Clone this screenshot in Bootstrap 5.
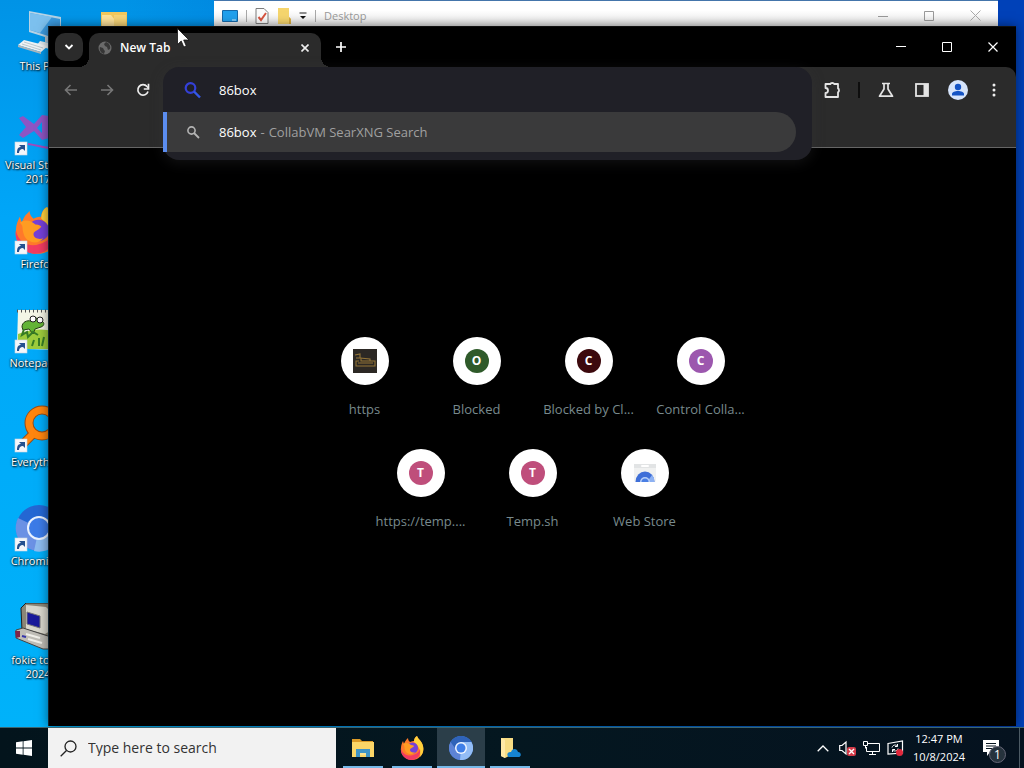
<!DOCTYPE html>
<html lang="en">
<head>
<meta charset="utf-8">
<meta name="viewport" content="width=device-width, initial-scale=1">
<title>Desktop</title>
<link href="https://cdn.jsdelivr.net/npm/bootstrap@5.3.0/dist/css/bootstrap.min.css" rel="stylesheet">
<style>
body{font-family:"Open Sans","Noto Sans",sans-serif;font-size:13px;line-height:16px;cursor:default}
svg{display:block;flex:none}
button{border:0;background:none;padding:0;color:inherit;display:flex;align-items:center;justify-content:center;flex:none}
.desktop{background:linear-gradient(90deg,rgba(0,60,170,0) 12%,#0041b8 96%),linear-gradient(180deg,#0093e6,#00a6f8 30%,#00b2fa);min-height:0}
.shortcut{width:76px;height:99px;padding-top:9px;font-size:11px;line-height:14px;color:#fff;text-shadow:1px 1px 2px #000,0 0 2px #000;text-decoration:none;text-align:center}
.shortcut svg{margin-bottom:2px}
.shortcut-col{width:76px}
.explorer{left:214px;right:26px;top:0;height:400px;background:#fff;border-top:1px solid #4475ab}
.explorer-bar{height:25px;background:linear-gradient(#fff 40%,#e4e4e4);color:#9a9a9a;font-size:11px;padding-left:8px;padding-top:4px}
.vline{width:1px;height:12px;background:#a8a8a8}
.caption-btn{width:46px}
.browser{left:48px;right:8px;top:26px;bottom:1px;background:#000;border-left:1px solid #10202c;border-top:1px solid #101010;box-shadow:0 0 10px rgba(0,0,0,.5);color:#e3e3e3}
.tabstrip{height:40px;padding-left:6px}
.tab-search{width:28px;height:28px;margin-top:6px;background:#2b2b2b;border-radius:10px}
.tab-active{width:232px;height:34px;margin:6px 0 0 6px;padding:0 8px 0 9px;background:#2b2b2b;border-radius:10px 10px 0 0;color:#fff;font-size:12px;font-weight:600}
.tab-active::before,.tab-active::after{content:"";position:absolute;bottom:0;width:10px;height:10px}
.tab-active::before{left:-10px;background:radial-gradient(circle at 0 0,transparent 10px,#2b2b2b 10px)}
.tab-active::after{right:-10px;background:radial-gradient(circle at 100% 0,transparent 10px,#2b2b2b 10px)}
.tab-new{width:28px;margin-left:6px;height:40px}
.toolbar{height:81px;background:#2b2b2b;border-bottom:1px solid #666;border-top-right-radius:10px;padding:0 4px}
.tool{width:36px;height:46px}
.tool-sep{width:18px;height:46px}
.tool-sep span{width:2px;height:16px;background:#0e0e0e}
.omni{margin:0 2px}
.omni-pop{left:0;right:0;top:0;background:#202027;border-radius:16px;padding-bottom:8px;box-shadow:0 3px 14px rgba(60,60,64,.3);z-index:2}
.omni-row{height:45px;padding-left:18px}
.omni-row input{border:0;outline:0;background:none;color:#fff;font-size:13px;padding:0;margin-left:14px}
.omni-hit{height:40px;margin-right:16px;padding-left:18px;background:#3a3a3b;border-left:4px solid #5b8def;border-radius:0 20px 20px 0;color:#a0a0a0;text-decoration:none}
.omni-hit b{font-weight:400;color:#fff;margin-left:14px}
.tiles{width:448px;max-width:100%}
.tile{width:112px;height:112px;padding:16px 12px;color:#788a8d;text-decoration:none}
.tile-disc{width:48px;height:48px;background:#fff;margin-bottom:16px;flex:none}
.tile-dot{width:24px;height:24px;color:#fff;font-size:12px;font-weight:700}
.green{background:#2f5a2a}.maroon{background:#3c090d}.violet{background:#9c57ae}.rose{background:#bf4e7b}
.edge{height:1px;background:#3c6570}
.taskbar{height:40px;background:linear-gradient(90deg,#03141c,#041720 50%,#05121f);color:#fff;flex:none}
.start{width:48px}
.search{width:288px;background:#f2f2f2;color:#333;padding-left:12px;margin-right:3px}
.search input{border:0;outline:0;background:none;font-size:14px;color:#333;padding:0;margin-left:11px;width:220px}
.search input::placeholder{color:#333;opacity:1}
.task{width:48px;margin-right:1px;position:relative}
.task::after{content:"";position:absolute;left:4px;right:4px;bottom:0;height:2px;background:#76b9e8}
.task.on{background:#2b3e49}
.task.on::after{left:0;right:0}
.tray{width:24px}
.clock{width:64px;font-size:11px;line-height:18px;padding-top:2px;text-align:center;white-space:nowrap}
.notify{width:48px;position:relative}
.notify-count{left:18px;top:18px;width:17px;height:17px;background:#26333d;border:1px solid #667;font-size:12px}
.show-desk{width:5px;border-left:1px solid #4c5a64}
.pointer{left:177px;top:28px;z-index:5}
</style>
</head>
<body class="vh-100 d-flex flex-column overflow-hidden">
<svg width="0" height="0" class="position-absolute" aria-hidden="true"><defs>
<g id="lnk"><rect x="1" y="34" width="12" height="13" fill="#f4f6fa" stroke="#cdd6e0" stroke-width=".6"/><path d="M3 45c0-4 1-6 4-6l-2-2h6v6l-2-2c-3 0-4 2-4 4z" fill="#24508f"/></g>
<g id="orb"><circle cx="12" cy="12" r="12" fill="#4285e8"/><path d="M12 12L1.6 6A12 12 0 0 0 11 24z" fill="#5d83d6"/><path d="M12 12L11 24A12 12 0 0 0 22.4 6H12z" fill="#93bdf6"/><path d="M1.6 6A12 12 0 0 1 22.4 6H12a6 6 0 0 0-6 6z" fill="#2f63b9"/><circle cx="12" cy="12" r="6" fill="#eef4ff"/><circle cx="12" cy="12" r="4.5" fill="#3f7fe8"/></g>
<g id="fox"><path d="M4 8C5 5 6 4 8 2c0 2 1 3 2 4 2-1 3-1 4-1 0-2 1-4 3-5 1 3 5 5 6 10 2 8-4 14-11 14S0 18 1 12c0-3 1-5 2-7z" fill="#ff7a2a"/><path d="M17 0c1 3 5 5 6 10 1 4 0 8-3 11 1-6-1-11-6-15 0-3 1-5 3-6z" fill="#ffd23c"/><path d="M1 12c1 6 7 9 12 7 4-1 6-3 7-6 1 5-2 11-9 11C5 24 0 18 1 12z" fill="#f23b62"/><circle cx="12.500" cy="12" r="5.500" fill="#7540d8"/><path d="M3 8c3-2 6-1 8 1 2 0 3 1 3 1-1 2-4 2-4 4s3 3 5 2c-3 4-9 2-10-2-1-3 0-4-2-6z" fill="#ff9c22"/></g>
</defs></svg>

<main class="desktop position-relative flex-grow-1 overflow-hidden">
  <nav class="d-flex h-100" aria-label="Desktop shortcuts">
    <div class="shortcut-col d-flex flex-column flex-shrink-0">
      <a href="#" class="shortcut d-flex flex-column align-items-center"><svg width="48" height="48" viewBox="0 0 48 48"><path d="M15 2l32 6v25L15 23z" fill="#b5d3e6"/><path d="M16 4l30 6v21L16 21z" fill="#3b9be0"/><path d="M16 4l22 4-12 16-10-3z" fill="#7cc0ee"/><path d="M31 27l8 2v6l-8-2z" fill="#b5c8d4"/><path d="M26 32l14 3 3 3-8 2-12-4z" fill="#dfe8ec"/><path d="M10 31l24 6-7 6L4 36z" fill="#eef2f4"/><path d="M4 36l23 7v2L4 38z" fill="#a9b6bd"/><path d="M10 33l19 6M8 35l19 6" stroke="#bcc8ce" fill="none"/></svg>This PC</a>
      <a href="#" class="shortcut d-flex flex-column align-items-center"><svg width="48" height="48" viewBox="0 0 48 48"><path d="M5 10l4-2 11 8 8-9 7 1v22l-7 2-8-9-11 7-4-3 7-8zM28 14l-5 6 5 5z" fill="#8d55c4" fill-rule="evenodd"/><path d="M14 36c8 1 16 4 30 5" stroke="#a149bc" stroke-width="2" fill="none"/><use href="#lnk"/></svg>Visual Studio 2017</a>
      <a href="#" class="shortcut d-flex flex-column align-items-center"><svg width="48" height="48" viewBox="0 0 48 48"><use href="#fox" transform="scale(1.950)"/><use href="#lnk"/></svg>Firefox</a>
      <a href="#" class="shortcut d-flex flex-column align-items-center"><svg width="48" height="48" viewBox="0 0 48 48"><path d="M4 4h38l3 40-33-1-9-3z" fill="#f4f6e6"/><path d="M4 28q20-8 40-2v17H12L4 40z" fill="#9ccc3c"/><path d="M3 5h40" stroke="#555" stroke-width="3" stroke-dasharray="1 3"/><path d="M8 21c0-5 5-7 9-6 1-4 5-5 7-1l4 1c3 2 2 5-1 6l-6 2-2 5-4-5-6 1z" fill="#63b436" stroke="#263f16"/><circle cx="19" cy="13" r="3" fill="#fff" stroke="#222"/><circle cx="26" cy="14" r="3" fill="#fff" stroke="#222"/><path d="M10 23l-2 6 5-3 1 5 5-5 5 3M20 34l-2 6m7-8v8m5-9l-2 9" stroke="#357c25" stroke-width="2" fill="none"/><use href="#lnk"/></svg>Notepad++</a>
      <a href="#" class="shortcut d-flex flex-column align-items-center"><svg width="48" height="48" viewBox="0 0 48 48"><g fill="none"><circle cx="28" cy="18" r="13" stroke="#9a4b14" stroke-width="9"/><path d="M19 29L7 41" stroke="#9a4b14" stroke-width="9"/><circle cx="28" cy="18" r="13" stroke="#ff850e" stroke-width="7"/><path d="M19 29L7 41" stroke="#ff850e" stroke-width="7"/></g><use href="#lnk"/></svg>Everything</a>
      <a href="#" class="shortcut d-flex flex-column align-items-center"><svg width="48" height="48" viewBox="0 0 48 48"><circle cx="25" cy="24" r="23" fill="#2467d3"/><path d="M25 24L4 14a23 23 0 0 0 20 33z" fill="#6b91e4"/><path d="M25 24l-5 23a23 23 0 0 0 27-30z" fill="#8cbbef"/><circle cx="25" cy="24" r="12" fill="#eaf2ff"/><circle cx="25" cy="24" r="10" fill="#3c7be7"/><use href="#lnk"/></svg>Chromium</a>
      <a href="#" class="shortcut d-flex flex-column align-items-center"><svg width="48" height="48" viewBox="0 0 48 48"><path d="M7 5l5-5h22l8 4v26l-8 6-26-8z" fill="#8a8677" stroke="#222"/><path d="M12 2l20 2 4 4v20l-5 3-19-5z" fill="#d9d7cd"/><path d="M13 9l13 4v12l-13-4z" fill="#1a1a9a" stroke="#777"/><path d="M2 27l7-2 25 8 8 5-7 8-6 0L2 35z" fill="#bfbdb6" stroke="#444"/><path d="M12 31l14 4M14 36l14 4" stroke="#f0efe9" stroke-width="2"/><path d="M1 28h5v6l-4 1z" fill="#7e2448"/><path d="M8 33l4 1" stroke="#33a" stroke-width="2"/></svg>fokie town 2024</a>
    </div>
    <div class="shortcut-col flex-shrink-0">
      <a href="#" aria-label="Folder" class="shortcut d-flex flex-column align-items-center"><svg width="48" height="48" viewBox="0 0 48 48"><path d="M11 3h26v40H11z" fill="#f3c85c"/><path d="M12 6h9l4 5v30H12z" fill="#ffe39b"/><path d="M24 6h12v30H24z" fill="#f7d477"/></svg></a>
    </div>
  </nav>

  <section class="explorer position-absolute" aria-label="Desktop folder window">
    <div class="explorer-bar d-flex align-items-center">
      <svg width="16" height="14" viewBox="0 0 16 14"><rect width="16" height="12" y="1" rx="1" fill="#1668a8"/><rect x="1" y="2" width="14" height="10" fill="#22a0ec"/><path d="M10 11h4" stroke="#cfeaff"/></svg>
      <span class="vline ms-2 me-2"></span>
      <svg width="14" height="16" viewBox="0 0 14 16"><path d="M1 .5h8l4 4v11H1z" fill="#fbfbfb" stroke="#7d7d7d"/><path d="M3.500 9l2.500 3 5-7" fill="none" stroke="#d65440" stroke-width="2"/></svg>
      <svg width="14" height="16" viewBox="0 0 14 16" class="ms-2"><path d="M1 0h11v9l2 2v5H1z" fill="#f5d56d"/><path d="M12 9l2 2v5h-2z" fill="#d9ad42"/></svg>
      <svg width="8" height="8" viewBox="0 0 8 8" class="ms-2"><path d="M.5 1h7" stroke="#222"/><path d="M1 4h6L4 7z" fill="#111"/></svg>
      <span class="vline ms-2 me-2"></span>
      <span class="flex-grow-1">Desktop</span>
      <button class="caption-btn" aria-label="Minimize"><svg width="10" height="10"><path d="M0 5.500h10" stroke="#999"/></svg></button>
      <button class="caption-btn" aria-label="Maximize"><svg width="10" height="10"><path d="M.5.5h9v9h-9z" fill="none" stroke="#999"/></svg></button>
      <button class="caption-btn" aria-label="Close"><svg width="11" height="11"><path d="M.5.5l10 10m0-10l-10 10" stroke="#aaa"/></svg></button>
    </div>
  </section>

  <section class="browser position-absolute d-flex flex-column" aria-label="Browser">
    <header class="tabstrip d-flex flex-shrink-0">
      <button class="tab-search" aria-label="Search tabs"><svg width="10" height="6" viewBox="0 0 10 6"><path d="M1.500 1L5 4.500 8.500 1" stroke="#fff" stroke-width="1.800" fill="none"/></svg></button>
      <div class="tab-active position-relative d-flex align-items-center">
        <svg width="14" height="14" viewBox="0 0 14 14" class="me-2 mb-1"><circle cx="7" cy="7" r="6.500" fill="#6a6a6a"/><path d="M2 6l3 1 1 2 1 1-1 3C3 12 1 9 2 6zM8 1l-2 2 1 2 2 1 1 3 2-1c1-3-1-6-4-7z" fill="#363636"/></svg>
        <span class="flex-grow-1 pb-1">New Tab</span>
        <button class="me-1 pb-1" aria-label="Close tab"><svg width="8" height="8" viewBox="0 0 8 8"><path d="M.5.5l7 7m0-7l-7 7" stroke="#eee" stroke-width="1.600"/></svg></button>
      </div>
      <button class="tab-new" aria-label="New tab"><svg width="10" height="10"><path d="M5 0v10M0 5h10" stroke="#fff" stroke-width="1.700"/></svg></button>
      <div class="ms-auto d-flex">
        <button class="caption-btn" aria-label="Minimize window"><svg width="10" height="10"><path d="M0 4.500h10" stroke="#fff"/></svg></button>
        <button class="caption-btn" aria-label="Maximize window"><svg width="10" height="10"><path d="M.5.5h9v9h-9z" fill="none" stroke="#fff"/></svg></button>
        <button class="caption-btn" aria-label="Close window"><svg width="10" height="10"><path d="M.5.5l9 9m0-9l-9 9" stroke="#fff" stroke-width="1.200"/></svg></button>
      </div>
    </header>

    <div class="toolbar d-flex align-items-start flex-shrink-0">
      <button class="tool" aria-label="Back"><svg width="14" height="12" viewBox="0 0 14 12"><path d="M6.500 1L1.500 6l5 5M1.500 6H13" stroke="#777" stroke-width="1.600" fill="none"/></svg></button>
      <button class="tool" aria-label="Forward"><svg width="14" height="12" viewBox="0 0 14 12"><path d="M7.500 1l5 5-5 5M12.500 6H1" stroke="#777" stroke-width="1.600" fill="none"/></svg></button>
      <button class="tool" aria-label="Reload"><svg width="14" height="14" viewBox="0 0 14 14"><path d="M12 8.500A5.200 5.200 0 1 1 11 3.500L12.500 5" stroke="#eee" stroke-width="1.700" fill="none"/><path d="M12.500.8v5.200H7.800" stroke="#eee" stroke-width="1.700" fill="none"/></svg></button>
      <div class="omni position-relative flex-grow-1">
        <div class="omni-pop position-absolute">
          <div class="omni-row d-flex align-items-center">
            <svg width="24" height="18" viewBox="0 0 24 18"><circle cx="9.500" cy="7" r="4.800" fill="none" stroke="#3440d8" stroke-width="2.200"/><path d="M13 10.500l6 6" stroke="#3458e8" stroke-width="2.400"/></svg>
            <input class="flex-grow-1" type="text" value="86box" aria-label="Address and search bar">
          </div>
          <a href="#" class="omni-hit d-flex align-items-center"><svg width="20" height="14" viewBox="0 0 20 14"><circle cx="6.500" cy="5.500" r="3.600" fill="none" stroke="#b4b4b4" stroke-width="1.600"/><path d="M9 8l5 5" stroke="#b4b4b4" stroke-width="1.800"/></svg><b>86box</b><span class="mx-1">-</span><span>CollabVM SearXNG Search</span></a>
        </div>
      </div>
      <button class="tool" aria-label="Extensions"><svg width="18" height="18" viewBox="0 0 18 18"><path d="M2.500 3H7.500a1.800 1 0 0 1 3.600 0H15V7.500a1 1.800 0 0 1 0 3.600V16H2.500v-4a2.300 2.300 0 0 0 0-5z" fill="none" stroke="#e4e4e4" stroke-width="1.800" stroke-linejoin="round"/></svg></button>
      <div class="tool-sep d-flex align-items-center justify-content-center"><span></span></div>
      <button class="tool" aria-label="Experiments"><svg width="16" height="16" viewBox="0 0 16 16"><path d="M4 1.500h8M6 2v5l-4.500 7.200h13L10 7V2" fill="none" stroke="#e4e4e4" stroke-width="1.700" stroke-linejoin="round"/></svg></button>
      <button class="tool" aria-label="Side panel"><svg width="14" height="14" viewBox="0 0 14 14"><rect x="1" y="1" width="12" height="12" fill="none" stroke="#e4e4e4" stroke-width="1.800"/><path d="M8.500 1H13v12H8.500z" fill="#e4e4e4"/></svg></button>
      <button class="tool" aria-label="Profile"><svg width="20" height="20" viewBox="0 0 20 20"><circle cx="10" cy="10" r="10" fill="#d6e4fb"/><circle cx="10" cy="7" r="3.200" fill="#1453c4"/><path d="M4 15.500v-1.500c0-2 3-3 6-3s6 1 6 3v1.500z" fill="#1453c4"/></svg></button>
      <button class="tool" aria-label="Menu"><svg width="4" height="14" viewBox="0 0 4 14" fill="#eee"><circle cx="2" cy="2" r="1.500"/><circle cx="2" cy="7" r="1.500"/><circle cx="2" cy="12" r="1.500"/></svg></button>
    </div>

    <div class="flex-grow-1 d-flex align-items-center justify-content-center pb-2">
      <div class="tiles d-flex flex-wrap justify-content-center">
        <a href="#" class="tile d-flex flex-column align-items-center"><span class="tile-disc rounded-circle d-flex align-items-center justify-content-center"><svg width="24" height="24" viewBox="0 0 24 24"><path d="M0 0h24v24H0z" fill="#2c2824"/><path d="M2 6l5-1v4l10 1v2h5v5H3v-5h3M3 9h5v3h9M5 14h15" fill="none" stroke="#937437" stroke-width="1.100"/></svg></span><span>https</span></a>
        <a href="#" class="tile d-flex flex-column align-items-center"><span class="tile-disc rounded-circle d-flex align-items-center justify-content-center"><span class="tile-dot green rounded-circle d-flex align-items-center justify-content-center">O</span></span><span>Blocked</span></a>
        <a href="#" class="tile d-flex flex-column align-items-center"><span class="tile-disc rounded-circle d-flex align-items-center justify-content-center"><span class="tile-dot maroon rounded-circle d-flex align-items-center justify-content-center">C</span></span><span class="text-nowrap">Blocked by Cl...</span></a>
        <a href="#" class="tile d-flex flex-column align-items-center"><span class="tile-disc rounded-circle d-flex align-items-center justify-content-center"><span class="tile-dot violet rounded-circle d-flex align-items-center justify-content-center">C</span></span><span class="text-nowrap">Control Colla...</span></a>
        <a href="#" class="tile d-flex flex-column align-items-center"><span class="tile-disc rounded-circle d-flex align-items-center justify-content-center"><span class="tile-dot rose rounded-circle d-flex align-items-center justify-content-center">T</span></span><span class="text-nowrap">https://temp....</span></a>
        <a href="#" class="tile d-flex flex-column align-items-center"><span class="tile-disc rounded-circle d-flex align-items-center justify-content-center"><span class="tile-dot rose rounded-circle d-flex align-items-center justify-content-center">T</span></span><span>Temp.sh</span></a>
        <a href="#" class="tile d-flex flex-column align-items-center"><span class="tile-disc rounded-circle d-flex align-items-center justify-content-center"><svg width="24" height="24" viewBox="0 0 24 24"><path d="M1 3h22v16a2 2 0 0 1-2 2H3a2 2 0 0 1-2-2z" fill="#f0f1f1"/><path d="M1 3h22v4H1z" fill="#e2e4e5"/><rect x="8" y="4" width="8" height="2" rx="1" fill="#fff"/><path d="M2.500 21a9.500 10.500 0 0 1 19 0z" fill="#3f6fd8"/><path d="M14 21l5-7a9 9 0 0 1 2.500 7z" fill="#8db1f2"/><path d="M7 21a5 5 0 0 1 10 0z" fill="#b9d0f8"/><path d="M8.500 21a3.500 3.500 0 0 1 7 0z" fill="#4a7fe4"/></svg></span><span>Web Store</span></a>
      </div>
    </div>
  </section>

  <svg class="pointer position-absolute" width="13" height="20" viewBox="0 0 13 20" aria-hidden="true"><path d="M.5.500v16l3.700-3.500 2.600 6 2.500-1-2.600-6H12z" fill="#fff" stroke="#111" stroke-width=".8"/></svg>
</main>

<div class="edge flex-shrink-0"></div>
<footer class="taskbar d-flex">
  <button class="start" aria-label="Start"><svg width="16" height="16" viewBox="0 0 16 16" fill="#fff"><path d="M0 2.300L6.700 1.300v6.300H0zM7.500 1.200L16 0v7.600H7.500zM0 8.400h6.700v6.300L0 13.700zM7.500 8.400H16V16l-8.500-1.200z"/></svg></button>
  <label class="search d-flex align-items-center"><svg width="17" height="17" viewBox="0 0 17 17"><circle cx="10.500" cy="6.500" r="5.500" fill="none" stroke="#222" stroke-width="1.300"/><path d="M6.500 10.500L.7 16.300" stroke="#222" stroke-width="1.300"/></svg><input type="text" placeholder="Type here to search" aria-label="Type here to search"></label>
  <button class="task" aria-label="File Explorer"><svg width="22" height="20" viewBox="0 0 22 20"><path d="M0 1h8l2 2h11v4H0z" fill="#dc9b27"/><path d="M0 4h22v15H0z" fill="#fbd667"/><path d="M4 11h14v8h-4v-4H8v4H4z" fill="#3f94c6"/><path d="M8 15h6v2H8z" fill="#f9e294"/></svg></button>
  <button class="task" aria-label="Firefox"><svg width="24" height="24" viewBox="0 0 24 24"><use href="#fox"/></svg></button>
  <button class="task on" aria-label="Chromium"><svg width="24" height="24" viewBox="0 0 24 24"><use href="#orb"/></svg></button>
  <button class="task" aria-label="Cloud folder"><svg width="22" height="22" viewBox="0 0 22 22"><path d="M2 1h12v16l-8 4-4-2z" fill="#f7dc83"/><path d="M2 1l4 2v18l-4-2z" fill="#ffe9a6"/><path d="M9 19.500c-2-3 1-5 3-4.500 1-4 6-4 7 0 3 0 4 4 1 5H10z" fill="#1685d2"/></svg></button>
  <div class="ms-auto d-flex">
    <button class="tray" aria-label="Show hidden icons"><svg width="12" height="7" viewBox="0 0 12 7"><path d="M.7 6.300L6 1l5.300 5.300" fill="none" stroke="#fff" stroke-width="1.300"/></svg></button>
    <button class="tray" aria-label="Volume muted"><svg width="17" height="16" viewBox="0 0 17 16"><path d="M.7 5.500H3L7 2v12l-4-3.500H.7z" fill="none" stroke="#fff" stroke-width="1.200"/><rect x="8" y="7" width="9" height="9" rx="2" fill="#d23a48"/><path d="M10 9l5 5m0-5l-5 5" stroke="#fff" stroke-width="1.400"/></svg></button>
    <button class="tray" aria-label="Network"><svg width="17" height="16" viewBox="0 0 17 16" fill="none" stroke="#fff"><path d="M5 3.500h11.500v8H3.500V7M9.500 12v2.500M6 14.500h7"/><path d="M.5 1.500h4v4h-4zM2.500 5.500v3"/></svg></button>
    <button class="tray" aria-label="Updates"><svg width="17" height="16" viewBox="0 0 17 16" fill="none" stroke="#fff" stroke-width="1.200"><path d="M1 3.500L15.500 1v12L1 14z"/><path d="M5 7.500c1-3 4-3 5.500-1.500m0-2v2.500H8M11 8.500c-1 3-4 3-5.500 1.500m0 2V9.500H8" stroke-width="1"/><circle cx="12.500" cy="12.500" r="3.500" fill="#e1283c" stroke="none"/></svg></button>
    <div class="clock">12:47 PM<br>10/8/2024</div>
    <button class="notify" aria-label="Notifications"><svg width="16" height="16" viewBox="0 0 16 16" class="me-2"><path d="M0 0h16v12H7l-3 4v-4H0z" fill="#fff"/><path d="M3 3.500h10M3 6h10M3 8.500h7" stroke="#071520"/></svg><span class="notify-count position-absolute rounded-circle d-flex align-items-center justify-content-center">1</span></button>
    <div class="show-desk"></div>
  </div>
</footer>
<script src="https://cdn.jsdelivr.net/npm/bootstrap@5.3.0/dist/js/bootstrap.bundle.min.js"></script>
</body>
</html>
